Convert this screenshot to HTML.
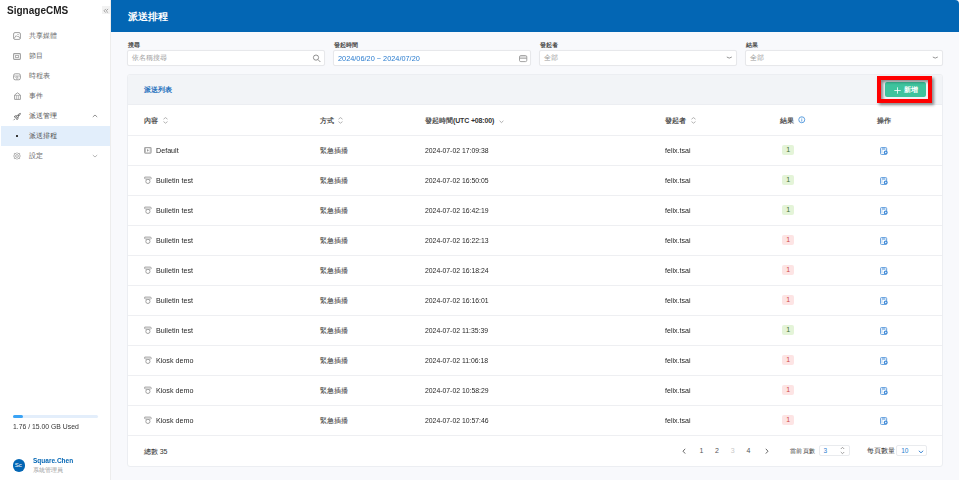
<!DOCTYPE html>
<html><head><meta charset="utf-8"><style>
*{box-sizing:border-box;margin:0;padding:0}
html,body{width:960px;height:480px;overflow:hidden;background:#fff;font-family:"Liberation Sans",sans-serif}
.b{position:absolute}
.s{position:absolute;overflow:visible}
.t{position:absolute;white-space:nowrap;line-height:1}
.inp{position:absolute;top:50px;width:197.5px;height:15.5px;background:#fff;border:1px solid #e7e8eb;border-radius:2px;box-shadow:0 0 1px rgba(0,0,0,0.04)}
.inp2{position:absolute;top:444.7px;height:11.6px;background:#fff;border:1px solid #e9ebee;border-radius:2px}
</style></head><body>
<div class="b" style="left:0;top:0;width:110px;height:480px;background:#fff"></div>
<div class="b" style="left:110px;top:0;width:1px;height:480px;background:#ededed"></div>
<div class="b" style="left:111px;top:0;width:848px;height:480px;background:#f8f9fc"></div>
<div class="b" style="left:111px;top:0;width:848px;height:32px;background:#0366b4;border-top-right-radius:4px"></div>
<div class="t" style="left:7.3px;top:4.8px;font-size:11.2px;color:#222;font-weight:bold;transform:scaleX(0.895);transform-origin:0 0">SignageCMS</div>
<div class="b" style="left:102.2px;top:6.2px;width:7.5px;height:8px;background:#f2f2f2"></div>
<svg class="s" style="left:103.4px;top:7.6px" width="6" height="6" viewBox="0 0 6 6"><path d="M2.9 0.9 L1 2.8 L2.9 4.7 M5.1 0.9 L3.2 2.8 L5.1 4.7" fill="none" stroke="#9a9a9a" stroke-width="0.9"/></svg>
<div class="b" style="left:1px;top:126px;width:109px;height:20px;background:#e2eefb"></div>
<div class="t" style="left:29px;top:32px;font-size:7px;color:#6b6b6b;font-weight:normal;">共享媒體</div>
<div class="t" style="left:29px;top:52px;font-size:7px;color:#6b6b6b;font-weight:normal;">節目</div>
<div class="t" style="left:29px;top:72px;font-size:7px;color:#6b6b6b;font-weight:normal;">時程表</div>
<div class="t" style="left:29px;top:92px;font-size:7px;color:#6b6b6b;font-weight:normal;">事件</div>
<div class="t" style="left:29px;top:112px;font-size:7px;color:#4a4a4a;font-weight:normal;">派送管理</div>
<div class="t" style="left:29px;top:132px;font-size:7px;color:#4a4a4a;font-weight:normal;">派送排程</div>
<div class="t" style="left:29px;top:152px;font-size:7px;color:#6b6b6b;font-weight:normal;">設定</div>
<svg class="s" style="left:13px;top:32px" width="8" height="8" viewBox="0 0 8 8"><rect x="0.6" y="0.6" width="6.8" height="6.8" rx="1.4" fill="none" stroke="#a0a0a0" stroke-width="1"/><path d="M1 6.6 L3.2 3.6 L4.6 5 L5.4 4.2 L7 6.4" fill="none" stroke="#a0a0a0" stroke-width="0.9"/><circle cx="5" cy="2.6" r="0.7" fill="#a0a0a0"/></svg>
<svg class="s" style="left:13px;top:52.5px" width="8" height="7" viewBox="0 0 8 7"><rect x="0.6" y="0.6" width="6.8" height="5.8" rx="0.8" fill="none" stroke="#a0a0a0" stroke-width="1.1"/><rect x="2.6" y="2.4" width="2.8" height="2.2" fill="none" stroke="#a0a0a0" stroke-width="0.8"/></svg>
<svg class="s" style="left:13px;top:72.5px" width="8" height="7.5" viewBox="0 0 8 7.5"><rect x="0.6" y="0.8" width="6.8" height="6" rx="1.6" fill="none" stroke="#a0a0a0" stroke-width="1"/><path d="M0.8 3 H7.2 M2.5 4.2 L3.5 5.4 M4.6 4.2 L5.6 5.4 M4 3 V6.6" fill="none" stroke="#a0a0a0" stroke-width="0.8"/></svg>
<svg class="s" style="left:13.5px;top:92px" width="7" height="8" viewBox="0 0 7 8"><path d="M0.6 7.4 V3 L3.5 0.8 L6.4 3 V7.4 Z" fill="none" stroke="#a0a0a0" stroke-width="1"/><path d="M0.6 3.4 H6.4 M2.6 3.4 V7.2 M4.4 3.4 V7.2" fill="none" stroke="#a0a0a0" stroke-width="0.7"/></svg>
<svg class="s" style="left:13px;top:112.5px" width="8" height="7.5" viewBox="0 0 8 7.5"><path d="M2.6 4.2 L5.6 1.2 Q6.8 0.4 7.4 0.4 Q7.4 1 6.6 2.2 L3.6 5.2 Z" fill="none" stroke="#666" stroke-width="0.9" stroke-linejoin="round"/><path d="M2.6 4.2 L1 3.8 L2.6 2.6 L3.8 2.8 M3.6 5.2 L4 6.8 L5.2 5.2 L5 4 M2.2 5.6 L0.6 7.2" fill="none" stroke="#666" stroke-width="0.8"/><circle cx="5.4" cy="2.4" r="0.6" fill="#666"/></svg>
<div class="b" style="left:15.8px;top:135px;width:2px;height:2px;background:#333;border-radius:0.3px"></div>
<svg class="s" style="left:13px;top:152px" width="8" height="8" viewBox="0 0 8 8"><path d="M4 0.6 L5 1.6 L6.6 1.4 L6.6 3 L7.4 4 L6.6 5 L6.6 6.6 L5 6.4 L4 7.4 L3 6.4 L1.4 6.6 L1.4 5 L0.6 4 L1.4 3 L1.4 1.4 L3 1.6 Z" fill="none" stroke="#a0a0a0" stroke-width="0.8" stroke-linejoin="round"/><circle cx="4" cy="4" r="1.4" fill="none" stroke="#a0a0a0" stroke-width="0.8"/></svg>
<svg class="s" style="left:92px;top:114px" width="6" height="4" viewBox="0 0 6 4"><path d="M0.8 3 L3 1 L5.2 3" fill="none" stroke="#777" stroke-width="0.8"/></svg>
<svg class="s" style="left:92px;top:154px" width="6" height="4" viewBox="0 0 6 4"><path d="M0.8 1 L3 3 L5.2 1" fill="none" stroke="#999" stroke-width="0.7"/></svg>
<div class="b" style="left:13px;top:414.5px;width:85px;height:3.5px;border-radius:2px;background:#e3eefb"></div>
<div class="b" style="left:13px;top:414.5px;width:10px;height:3.5px;border-radius:2px;background:#3aa3f5"></div>
<div class="t" style="left:13px;top:423px;font-size:7.6px;color:#333;font-weight:normal;transform:scaleX(0.9);transform-origin:0 0">1.76 / 15.00 GB Used</div>
<div class="b" style="left:12.7px;top:459.2px;width:12.4px;height:12.4px;border-radius:50%;background:#0366b4"></div>
<div class="t" style="left:14.8px;top:462.3px;font-size:6px;color:#fff;font-weight:normal;">Sc</div>
<div class="t" style="left:33.2px;top:456.9px;font-size:7px;color:#0366b4;font-weight:bold;transform:scaleX(0.93);transform-origin:0 0">Square.Chen</div>
<div class="t" style="left:33.2px;top:467.2px;font-size:6px;color:#999;font-weight:normal;">系統管理員</div>
<div class="t" style="left:127.8px;top:11.6px;font-size:9.7px;color:#fff;font-weight:bold;">派送排程</div>
<div class="t" style="left:127.5px;top:42.2px;font-size:6px;color:#4a4a4a;font-weight:bold;">搜尋</div>
<div class="inp" style="left:127.0px"></div>
<div class="t" style="left:333.5px;top:42.2px;font-size:6px;color:#4a4a4a;font-weight:bold;">發起時間</div>
<div class="inp" style="left:333.0px"></div>
<div class="t" style="left:539.5px;top:42.2px;font-size:6px;color:#4a4a4a;font-weight:bold;">發起者</div>
<div class="inp" style="left:539.0px"></div>
<div class="t" style="left:745.5px;top:42.2px;font-size:6px;color:#4a4a4a;font-weight:bold;">結果</div>
<div class="inp" style="left:745.0px"></div>
<div class="t" style="left:132px;top:54px;font-size:7px;color:#9e9e9e;font-weight:normal;">依名稱搜尋</div>
<div class="t" style="left:337.8px;top:54.9px;font-size:7.9px;color:#2a7ccf;font-weight:normal;transform:scaleX(0.93);transform-origin:0 0">2024/06/20 ~ 2024/07/20</div>
<div class="t" style="left:544px;top:54px;font-size:7px;color:#9a9a9a;font-weight:normal;">全部</div>
<div class="t" style="left:750px;top:54px;font-size:7px;color:#9a9a9a;font-weight:normal;">全部</div>
<svg class="s" style="left:312px;top:53.5px" width="10" height="9" viewBox="0 0 10 9"><circle cx="4" cy="3.6" r="2.6" fill="none" stroke="#858585" stroke-width="0.9"/><path d="M5.9 5.5 L8.4 8" stroke="#858585" stroke-width="0.9"/></svg>
<svg class="s" style="left:519px;top:54.6px" width="8.5" height="7.5" viewBox="0 0 8.5 7.5"><path d="M0.9 3.3 V1.9 Q0.9 0.6 2.2 0.6 H6.2 Q7.5 0.6 7.5 1.9 V3.3Z" fill="#e2e2e2"/><rect x="0.5" y="0.6" width="7.3" height="6" rx="1.3" fill="none" stroke="#999" stroke-width="0.9"/><path d="M0.6 3.3 H7.8" stroke="#999" stroke-width="0.8"/></svg>
<svg class="s" style="left:725.5px;top:56px" width="7" height="4" viewBox="0 0 7 4"><path d="M0.8 1 Q3.2 3.2 5.8 1" fill="none" stroke="#888" stroke-width="0.9"/></svg>
<svg class="s" style="left:931.5px;top:56px" width="7" height="4" viewBox="0 0 7 4"><path d="M0.8 1 Q3.2 3.2 5.8 1" fill="none" stroke="#888" stroke-width="0.9"/></svg>
<div class="b" style="left:127px;top:74px;width:815.5px;height:392.6px;background:#fff;border:1px solid #eceef2;border-radius:3px"></div>
<div class="b" style="left:128px;top:75px;width:814px;height:29px;background:#f2f4f7;border-radius:2px 2px 0 0"></div>
<div class="b" style="left:128px;top:104px;width:814px;height:0.75px;background:#eceef2"></div>
<div class="t" style="left:143.75px;top:85.5px;font-size:7px;color:#2470bd;font-weight:bold;">派送列表</div>
<div class="b" style="left:885px;top:81.7px;width:41.2px;height:15.8px;background:#3ec39d;border-radius:2px"></div>
<svg class="s" style="left:894.2px;top:86.8px" width="7" height="7" viewBox="0 0 7 7"><path d="M3.5 0.3 V6.7 M0.3 3.5 H6.7" stroke="#fff" stroke-width="0.8"/></svg>
<div class="t" style="left:904.3px;top:86.2px;font-size:7px;color:#fff;font-weight:bold;">新增</div>
<div class="b" style="left:877px;top:76px;width:55px;height:26.75px;border:4px solid #ff0000;filter:drop-shadow(2px 2px 1.6px rgba(0,0,0,0.45))"></div>
<div class="t" style="left:143.75px;top:117px;font-size:7px;color:#555;font-weight:bold;">內容</div>
<div class="t" style="left:320.2px;top:117px;font-size:7px;color:#555;font-weight:bold;">方式</div>
<div class="t" style="left:425px;top:117px;font-size:7px;color:#555;font-weight:bold;">發起時間<span style='letter-spacing:-0.15px;color:#333'>(UTC +08:00)</span></div>
<div class="t" style="left:665.1px;top:117px;font-size:7px;color:#555;font-weight:bold;">發起者</div>
<div class="t" style="left:780.2px;top:117px;font-size:7px;color:#555;font-weight:bold;">結果</div>
<div class="t" style="left:876.6px;top:117px;font-size:7px;color:#555;font-weight:bold;">操作</div>
<svg class="s" style="left:162.7px;top:116.5px" width="5" height="7" viewBox="0 0 5 7"><path d="M0.5 2.2 L2.5 0.6 L4.5 2.2 M0.5 4.6 L2.5 6.2 L4.5 4.6" fill="none" stroke="#a0a0a0" stroke-width="0.8"/></svg>
<svg class="s" style="left:337.7px;top:116.5px" width="5" height="7" viewBox="0 0 5 7"><path d="M0.5 2.2 L2.5 0.6 L4.5 2.2 M0.5 4.6 L2.5 6.2 L4.5 4.6" fill="none" stroke="#a0a0a0" stroke-width="0.8"/></svg>
<svg class="s" style="left:690.8px;top:116.5px" width="5" height="7" viewBox="0 0 5 7"><path d="M0.5 2.2 L2.5 0.6 L4.5 2.2 M0.5 4.6 L2.5 6.2 L4.5 4.6" fill="none" stroke="#a0a0a0" stroke-width="0.8"/></svg>
<svg class="s" style="left:498.6px;top:119.5px" width="5" height="3.5" viewBox="0 0 5 3.5"><path d="M0.6 0.8 L2.5 2.6 L4.4 0.8" fill="none" stroke="#9a9a9a" stroke-width="0.8"/></svg>
<svg class="s" style="left:797.5px;top:115.8px" width="7.5" height="7.5" viewBox="0 0 7.5 7.5"><circle cx="3.75" cy="3.75" r="3" fill="none" stroke="#62a2e0" stroke-width="1"/><path d="M3.75 3.2 V5.6" stroke="#62a2e0" stroke-width="0.9"/><circle cx="3.75" cy="2.1" r="0.5" fill="#62a2e0"/></svg>
<div class="b" style="left:128px;top:134.5px;width:814px;height:1px;background:#eeeff2"></div>
<svg class="s" style="left:144px;top:146.95px" width="8" height="7" viewBox="0 0 8 7"><rect x="0.6" y="0.6" width="6.5" height="5.5" rx="0.8" fill="none" stroke="#a6a6a6" stroke-width="1.1"/><path d="M1.5 1 V5.8 M6.2 1 V5.8" stroke="#b4b4b4" stroke-width="0.9"/><path d="M3 2 L5 3.35 L3 4.7Z" fill="#999"/></svg>
<div class="t" style="left:156.4px;top:146.55px;font-size:8px;color:#262626;font-weight:normal;transform:scaleX(0.895);transform-origin:0 0">Default</div>
<div class="t" style="left:320.2px;top:146.75px;font-size:7px;color:#262626;font-weight:normal;">緊急插播</div>
<div class="t" style="left:425px;top:146.55px;font-size:8px;color:#262626;font-weight:normal;transform:scaleX(0.855);transform-origin:0 0">2024-07-02 17:09:38</div>
<div class="t" style="left:665.1px;top:146.55px;font-size:8px;color:#262626;font-weight:normal;transform:scaleX(0.885);transform-origin:0 0">felix.tsai</div>
<div class="b" style="left:782.1px;top:145.15px;width:12.1px;height:9.6px;border-radius:2px;background:#e4f4d8"></div>
<div class="t" style="left:786.3px;top:146.45px;font-size:7px;color:#3f6b2e;font-weight:normal;">1</div>
<svg class="s" style="left:880.3px;top:146.95px" width="8" height="8" viewBox="0 0 8 8"><rect x="0.55" y="0.55" width="6.1" height="6.9" rx="0.9" fill="none" stroke="#5596da" stroke-width="0.9"/><path d="M1.8 2 H5.4" stroke="#5596da" stroke-width="1.1"/><path d="M2 3.1 V6.2" stroke="#8ab8e8" stroke-width="0.6"/><circle cx="5.7" cy="5.5" r="1.9" fill="#3f8ad8"/><path d="M5.1 4.5 L6.8 5.5 L5.1 6.5Z" fill="#fff"/></svg>
<div class="b" style="left:128px;top:164.5px;width:814px;height:1px;background:#eeeff2"></div>
<svg class="s" style="left:143.8px;top:175.95px" width="8" height="8" viewBox="0 0 8 8"><path d="M0.7 2.8 V1.1 H6.2 Q7.4 1.3 7.5 2.5" fill="none" stroke="#9c9c9c" stroke-width="0.95"/><path d="M0.7 2.6 H7.5" stroke="#bbb" stroke-width="0.6"/><path d="M2.1 2.8 V4 M5.9 2.8 V4" stroke="#9c9c9c" stroke-width="0.8"/><circle cx="3.9" cy="5.4" r="2.1" fill="none" stroke="#9c9c9c" stroke-width="0.95"/></svg>
<div class="t" style="left:156.4px;top:176.55px;font-size:8px;color:#262626;font-weight:normal;transform:scaleX(0.895);transform-origin:0 0">Bulletin test</div>
<div class="t" style="left:320.2px;top:176.75px;font-size:7px;color:#262626;font-weight:normal;">緊急插播</div>
<div class="t" style="left:425px;top:176.55px;font-size:8px;color:#262626;font-weight:normal;transform:scaleX(0.855);transform-origin:0 0">2024-07-02 16:50:05</div>
<div class="t" style="left:665.1px;top:176.55px;font-size:8px;color:#262626;font-weight:normal;transform:scaleX(0.885);transform-origin:0 0">felix.tsai</div>
<div class="b" style="left:782.1px;top:175.15px;width:12.1px;height:9.6px;border-radius:2px;background:#e4f4d8"></div>
<div class="t" style="left:786.3px;top:176.45px;font-size:7px;color:#3f6b2e;font-weight:normal;">1</div>
<svg class="s" style="left:880.3px;top:176.95px" width="8" height="8" viewBox="0 0 8 8"><rect x="0.55" y="0.55" width="6.1" height="6.9" rx="0.9" fill="none" stroke="#5596da" stroke-width="0.9"/><path d="M1.8 2 H5.4" stroke="#5596da" stroke-width="1.1"/><path d="M2 3.1 V6.2" stroke="#8ab8e8" stroke-width="0.6"/><circle cx="5.7" cy="5.5" r="1.9" fill="#3f8ad8"/><path d="M5.1 4.5 L6.8 5.5 L5.1 6.5Z" fill="#fff"/></svg>
<div class="b" style="left:128px;top:194.5px;width:814px;height:1px;background:#eeeff2"></div>
<svg class="s" style="left:143.8px;top:205.95px" width="8" height="8" viewBox="0 0 8 8"><path d="M0.7 2.8 V1.1 H6.2 Q7.4 1.3 7.5 2.5" fill="none" stroke="#9c9c9c" stroke-width="0.95"/><path d="M0.7 2.6 H7.5" stroke="#bbb" stroke-width="0.6"/><path d="M2.1 2.8 V4 M5.9 2.8 V4" stroke="#9c9c9c" stroke-width="0.8"/><circle cx="3.9" cy="5.4" r="2.1" fill="none" stroke="#9c9c9c" stroke-width="0.95"/></svg>
<div class="t" style="left:156.4px;top:206.55px;font-size:8px;color:#262626;font-weight:normal;transform:scaleX(0.895);transform-origin:0 0">Bulletin test</div>
<div class="t" style="left:320.2px;top:206.75px;font-size:7px;color:#262626;font-weight:normal;">緊急插播</div>
<div class="t" style="left:425px;top:206.55px;font-size:8px;color:#262626;font-weight:normal;transform:scaleX(0.855);transform-origin:0 0">2024-07-02 16:42:19</div>
<div class="t" style="left:665.1px;top:206.55px;font-size:8px;color:#262626;font-weight:normal;transform:scaleX(0.885);transform-origin:0 0">felix.tsai</div>
<div class="b" style="left:782.1px;top:205.15px;width:12.1px;height:9.6px;border-radius:2px;background:#e4f4d8"></div>
<div class="t" style="left:786.3px;top:206.45px;font-size:7px;color:#3f6b2e;font-weight:normal;">1</div>
<svg class="s" style="left:880.3px;top:206.95px" width="8" height="8" viewBox="0 0 8 8"><rect x="0.55" y="0.55" width="6.1" height="6.9" rx="0.9" fill="none" stroke="#5596da" stroke-width="0.9"/><path d="M1.8 2 H5.4" stroke="#5596da" stroke-width="1.1"/><path d="M2 3.1 V6.2" stroke="#8ab8e8" stroke-width="0.6"/><circle cx="5.7" cy="5.5" r="1.9" fill="#3f8ad8"/><path d="M5.1 4.5 L6.8 5.5 L5.1 6.5Z" fill="#fff"/></svg>
<div class="b" style="left:128px;top:224.5px;width:814px;height:1px;background:#eeeff2"></div>
<svg class="s" style="left:143.8px;top:235.95px" width="8" height="8" viewBox="0 0 8 8"><path d="M0.7 2.8 V1.1 H6.2 Q7.4 1.3 7.5 2.5" fill="none" stroke="#9c9c9c" stroke-width="0.95"/><path d="M0.7 2.6 H7.5" stroke="#bbb" stroke-width="0.6"/><path d="M2.1 2.8 V4 M5.9 2.8 V4" stroke="#9c9c9c" stroke-width="0.8"/><circle cx="3.9" cy="5.4" r="2.1" fill="none" stroke="#9c9c9c" stroke-width="0.95"/></svg>
<div class="t" style="left:156.4px;top:236.55px;font-size:8px;color:#262626;font-weight:normal;transform:scaleX(0.895);transform-origin:0 0">Bulletin test</div>
<div class="t" style="left:320.2px;top:236.75px;font-size:7px;color:#262626;font-weight:normal;">緊急插播</div>
<div class="t" style="left:425px;top:236.55px;font-size:8px;color:#262626;font-weight:normal;transform:scaleX(0.855);transform-origin:0 0">2024-07-02 16:22:13</div>
<div class="t" style="left:665.1px;top:236.55px;font-size:8px;color:#262626;font-weight:normal;transform:scaleX(0.885);transform-origin:0 0">felix.tsai</div>
<div class="b" style="left:782.1px;top:235.15px;width:12.1px;height:9.6px;border-radius:2px;background:#fde4e4"></div>
<div class="t" style="left:786.3px;top:236.45px;font-size:7px;color:#d04848;font-weight:normal;">1</div>
<svg class="s" style="left:880.3px;top:236.95px" width="8" height="8" viewBox="0 0 8 8"><rect x="0.55" y="0.55" width="6.1" height="6.9" rx="0.9" fill="none" stroke="#5596da" stroke-width="0.9"/><path d="M1.8 2 H5.4" stroke="#5596da" stroke-width="1.1"/><path d="M2 3.1 V6.2" stroke="#8ab8e8" stroke-width="0.6"/><circle cx="5.7" cy="5.5" r="1.9" fill="#3f8ad8"/><path d="M5.1 4.5 L6.8 5.5 L5.1 6.5Z" fill="#fff"/></svg>
<div class="b" style="left:128px;top:254.5px;width:814px;height:1px;background:#eeeff2"></div>
<svg class="s" style="left:143.8px;top:265.95px" width="8" height="8" viewBox="0 0 8 8"><path d="M0.7 2.8 V1.1 H6.2 Q7.4 1.3 7.5 2.5" fill="none" stroke="#9c9c9c" stroke-width="0.95"/><path d="M0.7 2.6 H7.5" stroke="#bbb" stroke-width="0.6"/><path d="M2.1 2.8 V4 M5.9 2.8 V4" stroke="#9c9c9c" stroke-width="0.8"/><circle cx="3.9" cy="5.4" r="2.1" fill="none" stroke="#9c9c9c" stroke-width="0.95"/></svg>
<div class="t" style="left:156.4px;top:266.55px;font-size:8px;color:#262626;font-weight:normal;transform:scaleX(0.895);transform-origin:0 0">Bulletin test</div>
<div class="t" style="left:320.2px;top:266.75px;font-size:7px;color:#262626;font-weight:normal;">緊急插播</div>
<div class="t" style="left:425px;top:266.55px;font-size:8px;color:#262626;font-weight:normal;transform:scaleX(0.855);transform-origin:0 0">2024-07-02 16:18:24</div>
<div class="t" style="left:665.1px;top:266.55px;font-size:8px;color:#262626;font-weight:normal;transform:scaleX(0.885);transform-origin:0 0">felix.tsai</div>
<div class="b" style="left:782.1px;top:265.15px;width:12.1px;height:9.6px;border-radius:2px;background:#fde4e4"></div>
<div class="t" style="left:786.3px;top:266.45px;font-size:7px;color:#d04848;font-weight:normal;">1</div>
<svg class="s" style="left:880.3px;top:266.95px" width="8" height="8" viewBox="0 0 8 8"><rect x="0.55" y="0.55" width="6.1" height="6.9" rx="0.9" fill="none" stroke="#5596da" stroke-width="0.9"/><path d="M1.8 2 H5.4" stroke="#5596da" stroke-width="1.1"/><path d="M2 3.1 V6.2" stroke="#8ab8e8" stroke-width="0.6"/><circle cx="5.7" cy="5.5" r="1.9" fill="#3f8ad8"/><path d="M5.1 4.5 L6.8 5.5 L5.1 6.5Z" fill="#fff"/></svg>
<div class="b" style="left:128px;top:284.5px;width:814px;height:1px;background:#eeeff2"></div>
<svg class="s" style="left:143.8px;top:295.95px" width="8" height="8" viewBox="0 0 8 8"><path d="M0.7 2.8 V1.1 H6.2 Q7.4 1.3 7.5 2.5" fill="none" stroke="#9c9c9c" stroke-width="0.95"/><path d="M0.7 2.6 H7.5" stroke="#bbb" stroke-width="0.6"/><path d="M2.1 2.8 V4 M5.9 2.8 V4" stroke="#9c9c9c" stroke-width="0.8"/><circle cx="3.9" cy="5.4" r="2.1" fill="none" stroke="#9c9c9c" stroke-width="0.95"/></svg>
<div class="t" style="left:156.4px;top:296.55px;font-size:8px;color:#262626;font-weight:normal;transform:scaleX(0.895);transform-origin:0 0">Bulletin test</div>
<div class="t" style="left:320.2px;top:296.75px;font-size:7px;color:#262626;font-weight:normal;">緊急插播</div>
<div class="t" style="left:425px;top:296.55px;font-size:8px;color:#262626;font-weight:normal;transform:scaleX(0.855);transform-origin:0 0">2024-07-02 16:16:01</div>
<div class="t" style="left:665.1px;top:296.55px;font-size:8px;color:#262626;font-weight:normal;transform:scaleX(0.885);transform-origin:0 0">felix.tsai</div>
<div class="b" style="left:782.1px;top:295.15px;width:12.1px;height:9.6px;border-radius:2px;background:#fde4e4"></div>
<div class="t" style="left:786.3px;top:296.45px;font-size:7px;color:#d04848;font-weight:normal;">1</div>
<svg class="s" style="left:880.3px;top:296.95px" width="8" height="8" viewBox="0 0 8 8"><rect x="0.55" y="0.55" width="6.1" height="6.9" rx="0.9" fill="none" stroke="#5596da" stroke-width="0.9"/><path d="M1.8 2 H5.4" stroke="#5596da" stroke-width="1.1"/><path d="M2 3.1 V6.2" stroke="#8ab8e8" stroke-width="0.6"/><circle cx="5.7" cy="5.5" r="1.9" fill="#3f8ad8"/><path d="M5.1 4.5 L6.8 5.5 L5.1 6.5Z" fill="#fff"/></svg>
<div class="b" style="left:128px;top:314.5px;width:814px;height:1px;background:#eeeff2"></div>
<svg class="s" style="left:143.8px;top:325.95px" width="8" height="8" viewBox="0 0 8 8"><path d="M0.7 2.8 V1.1 H6.2 Q7.4 1.3 7.5 2.5" fill="none" stroke="#9c9c9c" stroke-width="0.95"/><path d="M0.7 2.6 H7.5" stroke="#bbb" stroke-width="0.6"/><path d="M2.1 2.8 V4 M5.9 2.8 V4" stroke="#9c9c9c" stroke-width="0.8"/><circle cx="3.9" cy="5.4" r="2.1" fill="none" stroke="#9c9c9c" stroke-width="0.95"/></svg>
<div class="t" style="left:156.4px;top:326.55px;font-size:8px;color:#262626;font-weight:normal;transform:scaleX(0.895);transform-origin:0 0">Bulletin test</div>
<div class="t" style="left:320.2px;top:326.75px;font-size:7px;color:#262626;font-weight:normal;">緊急插播</div>
<div class="t" style="left:425px;top:326.55px;font-size:8px;color:#262626;font-weight:normal;transform:scaleX(0.855);transform-origin:0 0">2024-07-02 11:35:39</div>
<div class="t" style="left:665.1px;top:326.55px;font-size:8px;color:#262626;font-weight:normal;transform:scaleX(0.885);transform-origin:0 0">felix.tsai</div>
<div class="b" style="left:782.1px;top:325.15px;width:12.1px;height:9.6px;border-radius:2px;background:#e4f4d8"></div>
<div class="t" style="left:786.3px;top:326.45px;font-size:7px;color:#3f6b2e;font-weight:normal;">1</div>
<svg class="s" style="left:880.3px;top:326.95px" width="8" height="8" viewBox="0 0 8 8"><rect x="0.55" y="0.55" width="6.1" height="6.9" rx="0.9" fill="none" stroke="#5596da" stroke-width="0.9"/><path d="M1.8 2 H5.4" stroke="#5596da" stroke-width="1.1"/><path d="M2 3.1 V6.2" stroke="#8ab8e8" stroke-width="0.6"/><circle cx="5.7" cy="5.5" r="1.9" fill="#3f8ad8"/><path d="M5.1 4.5 L6.8 5.5 L5.1 6.5Z" fill="#fff"/></svg>
<div class="b" style="left:128px;top:344.5px;width:814px;height:1px;background:#eeeff2"></div>
<svg class="s" style="left:143.8px;top:355.95px" width="8" height="8" viewBox="0 0 8 8"><path d="M0.7 2.8 V1.1 H6.2 Q7.4 1.3 7.5 2.5" fill="none" stroke="#9c9c9c" stroke-width="0.95"/><path d="M0.7 2.6 H7.5" stroke="#bbb" stroke-width="0.6"/><path d="M2.1 2.8 V4 M5.9 2.8 V4" stroke="#9c9c9c" stroke-width="0.8"/><circle cx="3.9" cy="5.4" r="2.1" fill="none" stroke="#9c9c9c" stroke-width="0.95"/></svg>
<div class="t" style="left:156.4px;top:356.55px;font-size:8px;color:#262626;font-weight:normal;transform:scaleX(0.895);transform-origin:0 0">Kiosk demo</div>
<div class="t" style="left:320.2px;top:356.75px;font-size:7px;color:#262626;font-weight:normal;">緊急插播</div>
<div class="t" style="left:425px;top:356.55px;font-size:8px;color:#262626;font-weight:normal;transform:scaleX(0.855);transform-origin:0 0">2024-07-02 11:06:18</div>
<div class="t" style="left:665.1px;top:356.55px;font-size:8px;color:#262626;font-weight:normal;transform:scaleX(0.885);transform-origin:0 0">felix.tsai</div>
<div class="b" style="left:782.1px;top:355.15px;width:12.1px;height:9.6px;border-radius:2px;background:#fde4e4"></div>
<div class="t" style="left:786.3px;top:356.45px;font-size:7px;color:#d04848;font-weight:normal;">1</div>
<svg class="s" style="left:880.3px;top:356.95px" width="8" height="8" viewBox="0 0 8 8"><rect x="0.55" y="0.55" width="6.1" height="6.9" rx="0.9" fill="none" stroke="#5596da" stroke-width="0.9"/><path d="M1.8 2 H5.4" stroke="#5596da" stroke-width="1.1"/><path d="M2 3.1 V6.2" stroke="#8ab8e8" stroke-width="0.6"/><circle cx="5.7" cy="5.5" r="1.9" fill="#3f8ad8"/><path d="M5.1 4.5 L6.8 5.5 L5.1 6.5Z" fill="#fff"/></svg>
<div class="b" style="left:128px;top:374.5px;width:814px;height:1px;background:#eeeff2"></div>
<svg class="s" style="left:143.8px;top:385.95px" width="8" height="8" viewBox="0 0 8 8"><path d="M0.7 2.8 V1.1 H6.2 Q7.4 1.3 7.5 2.5" fill="none" stroke="#9c9c9c" stroke-width="0.95"/><path d="M0.7 2.6 H7.5" stroke="#bbb" stroke-width="0.6"/><path d="M2.1 2.8 V4 M5.9 2.8 V4" stroke="#9c9c9c" stroke-width="0.8"/><circle cx="3.9" cy="5.4" r="2.1" fill="none" stroke="#9c9c9c" stroke-width="0.95"/></svg>
<div class="t" style="left:156.4px;top:386.55px;font-size:8px;color:#262626;font-weight:normal;transform:scaleX(0.895);transform-origin:0 0">Kiosk demo</div>
<div class="t" style="left:320.2px;top:386.75px;font-size:7px;color:#262626;font-weight:normal;">緊急插播</div>
<div class="t" style="left:425px;top:386.55px;font-size:8px;color:#262626;font-weight:normal;transform:scaleX(0.855);transform-origin:0 0">2024-07-02 10:58:29</div>
<div class="t" style="left:665.1px;top:386.55px;font-size:8px;color:#262626;font-weight:normal;transform:scaleX(0.885);transform-origin:0 0">felix.tsai</div>
<div class="b" style="left:782.1px;top:385.15px;width:12.1px;height:9.6px;border-radius:2px;background:#fde4e4"></div>
<div class="t" style="left:786.3px;top:386.45px;font-size:7px;color:#d04848;font-weight:normal;">1</div>
<svg class="s" style="left:880.3px;top:386.95px" width="8" height="8" viewBox="0 0 8 8"><rect x="0.55" y="0.55" width="6.1" height="6.9" rx="0.9" fill="none" stroke="#5596da" stroke-width="0.9"/><path d="M1.8 2 H5.4" stroke="#5596da" stroke-width="1.1"/><path d="M2 3.1 V6.2" stroke="#8ab8e8" stroke-width="0.6"/><circle cx="5.7" cy="5.5" r="1.9" fill="#3f8ad8"/><path d="M5.1 4.5 L6.8 5.5 L5.1 6.5Z" fill="#fff"/></svg>
<div class="b" style="left:128px;top:404.5px;width:814px;height:1px;background:#eeeff2"></div>
<svg class="s" style="left:143.8px;top:415.95px" width="8" height="8" viewBox="0 0 8 8"><path d="M0.7 2.8 V1.1 H6.2 Q7.4 1.3 7.5 2.5" fill="none" stroke="#9c9c9c" stroke-width="0.95"/><path d="M0.7 2.6 H7.5" stroke="#bbb" stroke-width="0.6"/><path d="M2.1 2.8 V4 M5.9 2.8 V4" stroke="#9c9c9c" stroke-width="0.8"/><circle cx="3.9" cy="5.4" r="2.1" fill="none" stroke="#9c9c9c" stroke-width="0.95"/></svg>
<div class="t" style="left:156.4px;top:416.55px;font-size:8px;color:#262626;font-weight:normal;transform:scaleX(0.895);transform-origin:0 0">Kiosk demo</div>
<div class="t" style="left:320.2px;top:416.75px;font-size:7px;color:#262626;font-weight:normal;">緊急插播</div>
<div class="t" style="left:425px;top:416.55px;font-size:8px;color:#262626;font-weight:normal;transform:scaleX(0.855);transform-origin:0 0">2024-07-02 10:57:46</div>
<div class="t" style="left:665.1px;top:416.55px;font-size:8px;color:#262626;font-weight:normal;transform:scaleX(0.885);transform-origin:0 0">felix.tsai</div>
<div class="b" style="left:782.1px;top:415.15px;width:12.1px;height:9.6px;border-radius:2px;background:#fde4e4"></div>
<div class="t" style="left:786.3px;top:416.45px;font-size:7px;color:#d04848;font-weight:normal;">1</div>
<svg class="s" style="left:880.3px;top:416.95px" width="8" height="8" viewBox="0 0 8 8"><rect x="0.55" y="0.55" width="6.1" height="6.9" rx="0.9" fill="none" stroke="#5596da" stroke-width="0.9"/><path d="M1.8 2 H5.4" stroke="#5596da" stroke-width="1.1"/><path d="M2 3.1 V6.2" stroke="#8ab8e8" stroke-width="0.6"/><circle cx="5.7" cy="5.5" r="1.9" fill="#3f8ad8"/><path d="M5.1 4.5 L6.8 5.5 L5.1 6.5Z" fill="#fff"/></svg>
<div class="b" style="left:128px;top:434.5px;width:814px;height:1px;background:#eeeff2"></div>
<div class="t" style="left:143.75px;top:447.5px;font-size:7px;color:#333;font-weight:normal;">總數 35</div>
<svg class="s" style="left:681.8px;top:448.3px" width="4" height="6.4" viewBox="0 0 4 6.4"><path d="M3.2 0.8 L1 3.2 L3.2 5.6" fill="none" stroke="#555" stroke-width="0.9"/></svg>
<svg class="s" style="left:765.3px;top:448.3px" width="4" height="6.4" viewBox="0 0 4 6.4"><path d="M0.8 0.8 L3 3.2 L0.8 5.6" fill="none" stroke="#555" stroke-width="0.9"/></svg>
<div class="t" style="left:699.6px;top:447.4px;font-size:7px;color:#555;font-weight:normal;">1</div>
<div class="t" style="left:715px;top:447.4px;font-size:7px;color:#555;font-weight:normal;">2</div>
<div class="t" style="left:730.8px;top:447.4px;font-size:7px;color:#c8c8c8;font-weight:normal;">3</div>
<div class="t" style="left:746.5px;top:447.4px;font-size:7px;color:#555;font-weight:normal;">4</div>
<div class="t" style="left:789.7px;top:447.6px;font-size:6.3px;color:#333;font-weight:normal;letter-spacing:0.55px">當前頁數</div>
<div class="inp2" style="left:819.2px;width:30.5px"></div>
<div class="t" style="left:823.6px;top:447.6px;font-size:6.5px;color:#2a7ccf;font-weight:normal;">3</div>
<svg class="s" style="left:839.7px;top:446.2px" width="5" height="9" viewBox="0 0 5 9"><path d="M0.8 3 L2.5 1.3 L4.2 3 M0.8 6 L2.5 7.7 L4.2 6" fill="none" stroke="#888" stroke-width="0.8"/></svg>
<div class="t" style="left:866.7px;top:447.6px;font-size:6.6px;color:#333;font-weight:normal;">每頁數量</div>
<div class="inp2" style="left:896.3px;width:30.5px"></div>
<div class="t" style="left:901.2px;top:447.6px;font-size:6.5px;color:#2a7ccf;font-weight:normal;">10</div>
<svg class="s" style="left:917.8px;top:449.6px" width="6" height="3.5" viewBox="0 0 6 3.5"><path d="M0.8 0.8 L3 2.8 L5.2 0.8" fill="none" stroke="#2a7ccf" stroke-width="0.9"/></svg>
</body></html>
